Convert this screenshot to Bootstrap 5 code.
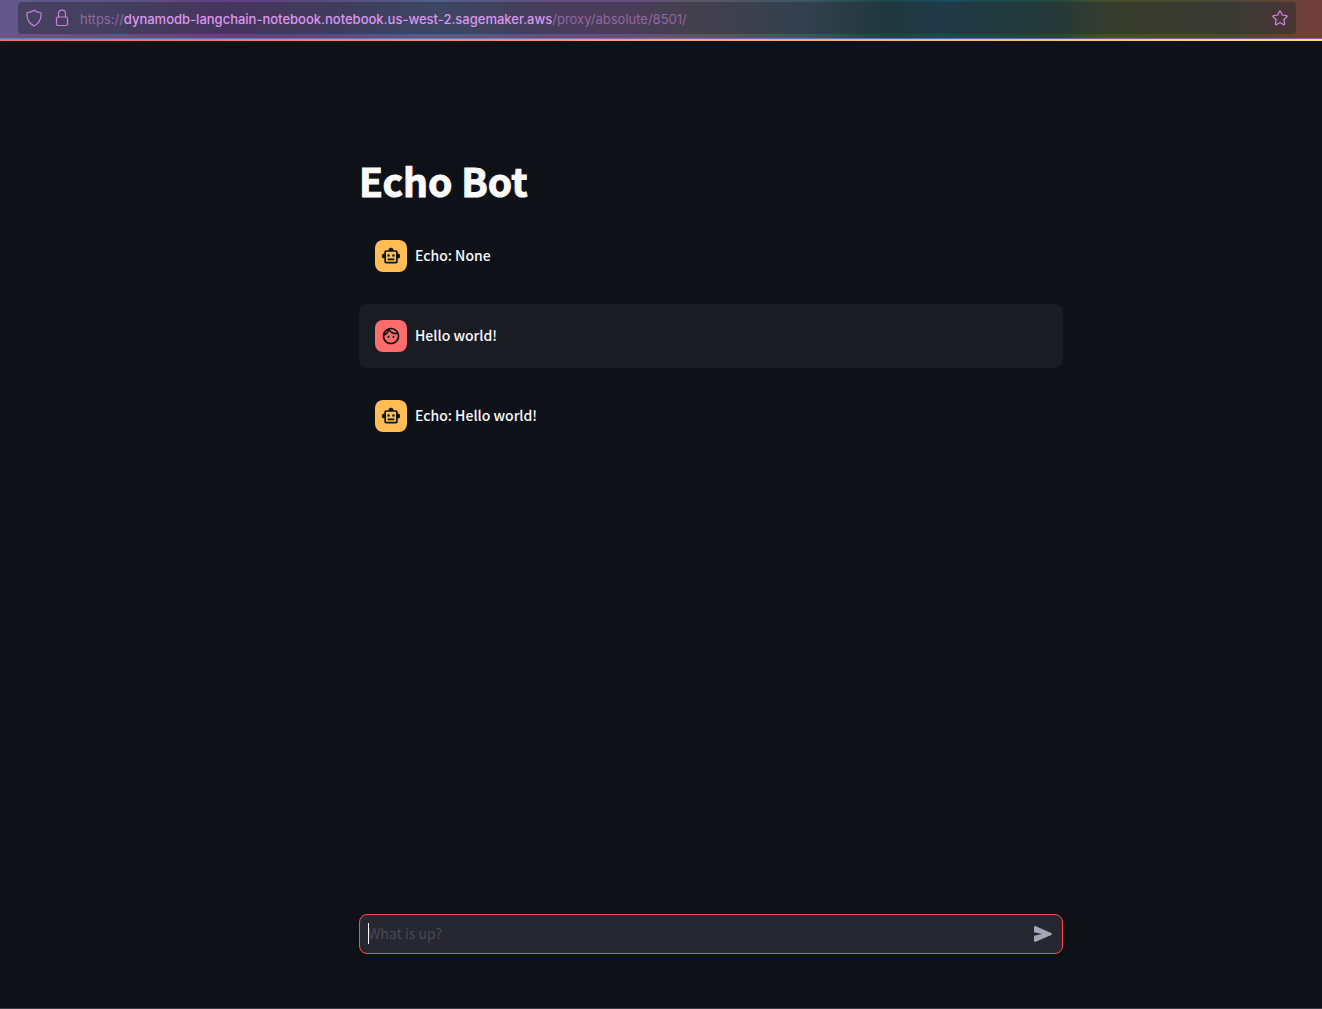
<!DOCTYPE html>
<html lang="en">
<head>
<meta charset="utf-8">
<meta name="viewport" content="width=device-width, initial-scale=1">
<title>Echo Bot</title>
<link href="https://cdn.jsdelivr.net/npm/bootstrap@5.3.0/dist/css/bootstrap.min.css" rel="stylesheet">
<style>
body { background: #0e1117; color: #fafafa; font-family: "Noto Sans CJK SC", "Noto Sans", sans-serif; }
.browser-bar {
  padding: 2px 26px 4px 18px;
  background: linear-gradient(90deg, #64588a 0%, #5d5384 9%, #634083 17%, #574b82 25%, #50608b 33%, #634e7f 42%, #66507b 48%, #5b5566 53%, #3c5666 61%, #1c4549 67%, #1b4a5c 71%, #1d4a4b 76%, #24483c 80%, #46502b 84%, #4a4b2b 88%, #4b4938 93%, #703f3b 99%);
  border-bottom: 1px solid rgba(140, 150, 225, .5);
}
.accent-line { height: 2px; background: linear-gradient(90deg, #ff6a55, #ff9567 40%, #ffbd6c 75%, #ffdc74); }
.address { height: 32px; padding: 0 8px; background: rgba(38, 40, 48, .45); border-radius: 4px; color: #c583da; font: 13px/32px Inter, sans-serif; }
.address .dim { color: #93679f; }
.address .host { font-weight: 500; color: #dc97ee; }
.lock { margin: 0 10px 0 12px; }
.url-text { padding-top: 2px; }
.bar-btn { color: #c583da; line-height: 0; }
.chat-area { padding-left: 100px; }
.chat-col { width: 100%; max-width: 704px; }
.app-title { font-size: 39px; line-height: 52px; font-weight: 700; -webkit-text-stroke: 1px #fafafa; margin: 113px 0 18px; }
.msg { padding: 16px; border-radius: 8px; margin-bottom: 16px; font-size: 14px; line-height: 24px; font-weight: 500; }
.msg-text { padding-bottom: 2px; }
.msg-user { background: #1a1c24; }
.avatar { width: 32px; height: 32px; border-radius: 8px; color: #0e1117; }
.avatar-bot { background: #ffbd54; }
.avatar-user { background: #ff6c6c; }
.composer { height: 40px; border: 1px solid #ff4b4b; border-radius: 8px; background: #262730; margin-bottom: 54px; }
.composer input { height: 38px; padding: 0 8px 2px; border: 0; background: transparent; box-shadow: none; color: #fafafa; font-size: 14px; line-height: 36px; }
.composer input:focus { background: transparent; box-shadow: none; color: #fafafa; }
.composer input::placeholder { color: #484952; opacity: 1; }
.caret { left: 8px; top: 8px; width: 1px; height: 21px; background: #fafafa; }
.send { padding: 0 7px 0 8px; color: #a3a8b8; line-height: 0; }
.page-edge { height: 1px; background: #3b3b42; }
</style>
</head>
<body class="d-flex flex-column min-vh-100">
<header>
  <div class="browser-bar">
    <div class="address d-flex align-items-center">
      <svg width="16" height="18" viewBox="0 0 16 18" fill="none" stroke="currentColor" stroke-width="1.2" stroke-linejoin="round" aria-hidden="true"><path d="M8 1.2C6.100 2.500 3.700 3.300 1.600 3.500 1 3.600.8 3.900.8 4.500c.1 4.600 1.200 9.700 7.200 12.400 6-2.700 7.100-7.800 7.200-12.400 0-.6-.2-.9-.8-1C12.300 3.300 9.900 2.500 8 1.200z"/></svg>
      <svg class="lock" width="16" height="18" viewBox="0 0 16 18" fill="none" stroke="currentColor" stroke-width="1.2" aria-hidden="true"><rect x="2.500" y="8" width="11" height="8.500" rx="1.500"/><path d="M4.500 8V4.700a3.500 3.500 0 0 1 7 0V8"/></svg>
      <div class="url-text flex-grow-1 text-nowrap"><span class="dim">https://</span><span class="host">dynamodb-langchain-notebook.notebook.us-west-2.sagemaker.aws</span><span class="dim">/proxy/absolute/8501/</span></div>
      <button type="button" class="bar-btn btn p-0 border-0" aria-label="Bookmark this page"><svg width="16" height="16" viewBox="0 0 16 16" fill="none" stroke="currentColor" stroke-width="1.3" stroke-linejoin="round"><path d="M7.400 1.300a.7.700 0 0 1 1.200 0l1.700 3.900 4.200.5c.6.100.8.700.4 1.100l-3.100 2.900.8 4.400c.1.600-.4.900-.9.600L8 12.500l-3.700 2.200c-.5.300-1 0-.9-.6l.8-4.400L1.100 6.800c-.4-.4-.2-1 .4-1.100l4.200-.5z"/></svg></button>
    </div>
  </div>
  <div class="accent-line"></div>
</header>

<div class="chat-area flex-grow-1 d-flex flex-column align-items-center">
  <main class="chat-col flex-grow-1">
    <h1 class="app-title">Echo Bot</h1>
    <div class="msg d-flex align-items-center gap-2">
      <div class="avatar avatar-bot d-flex align-items-center justify-content-center"><svg width="20" height="20" viewBox="0 0 24 24" fill="currentColor" aria-hidden="true"><use href="#bot"/></svg></div>
      <div class="msg-text">Echo: None</div>
    </div>
    <div class="msg msg-user d-flex align-items-center gap-2">
      <div class="avatar avatar-user d-flex align-items-center justify-content-center"><svg width="20" height="20" viewBox="0 0 24 24" fill="currentColor" aria-hidden="true"><path d="M10.250 13a1.250 1.250 0 1 1-2.500 0 1.250 1.250 0 0 1 2.500 0zM15 11.750a1.250 1.250 0 1 0 0 2.500 1.250 1.250 0 0 0 0-2.500zM22 12c0 5.520-4.480 10-10 10S2 17.520 2 12 6.480 2 12 2s10 4.480 10 10zM10.660 4.120C12.060 6.440 14.600 8 17.500 8c.46 0 .91-.05 1.340-.12C17.440 5.560 14.900 4 12 4c-.46 0-.91.05-1.340.12zM4.420 9.470a8.046 8.046 0 0 0 3.660-4.440 8.046 8.046 0 0 0-3.660 4.440zM20 12c0-.78-.12-1.530-.33-2.240-.7.150-1.420.240-2.170.240a10 10 0 0 1-7.760-3.690A10.016 10.016 0 0 1 4 11.860c.010.040 0 .090 0 .140 0 4.410 3.590 8 8 8s8-3.590 8-8z"/></svg></div>
      <div class="msg-text">Hello world!</div>
    </div>
    <div class="msg d-flex align-items-center gap-2">
      <div class="avatar avatar-bot d-flex align-items-center justify-content-center"><svg width="20" height="20" viewBox="0 0 24 24" fill="currentColor" aria-hidden="true"><path id="bot" fill-rule="evenodd" d="M20 9V7c0-1.100-.9-2-2-2h-3a3 3 0 0 0-6 0H6c-1.100 0-2 .9-2 2v2a3 3 0 0 0 0 6v4c0 1.100.9 2 2 2h12c1.100 0 2-.9 2-2v-4a3 3 0 0 0 0-6zm-2 10H6V7h12v12zM9 13a1.500 1.500 0 1 1 0-3 1.500 1.500 0 0 1 0 3zm7.500-1.500a1.500 1.500 0 1 1-3 0 1.500 1.500 0 0 1 3 0zM8 15h8v2H8z"/></svg></div>
      <div class="msg-text">Echo: Hello world!</div>
    </div>
  </main>
  <form class="composer chat-col d-flex align-items-center position-relative" onsubmit="return false">
    <input id="prompt" class="form-control" type="text" placeholder="What is up?" aria-label="Message">
    <span class="caret position-absolute"></span>
    <button type="submit" class="send btn border-0" aria-label="Send"><svg width="24" height="24" viewBox="0 0 24 24" fill="currentColor"><path d="M3 5.500v4.700L11 12l-8 1.800v4.700c0 1.100.9 1.700 1.800 1.300l15.400-6.900c.8-.4.8-1.400 0-1.800L4.800 4.200C3.900 3.800 3 4.400 3 5.500z"/></svg></button>
  </form>
</div>
<div class="page-edge"></div>
<script src="https://cdn.jsdelivr.net/npm/bootstrap@5.3.0/dist/js/bootstrap.bundle.min.js"></script>
</body>
</html>
